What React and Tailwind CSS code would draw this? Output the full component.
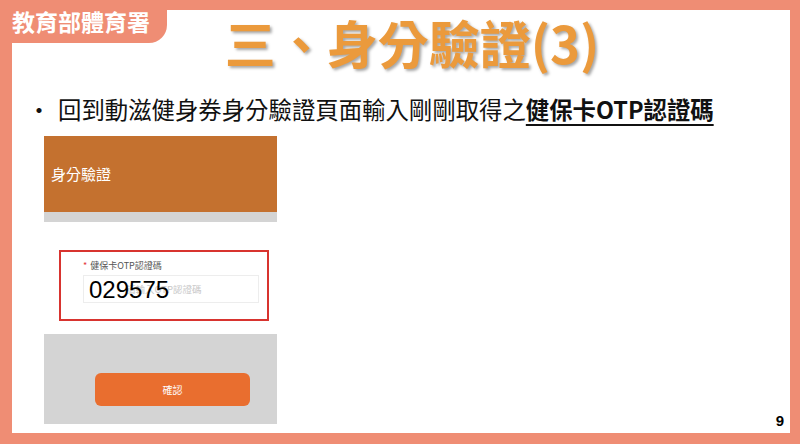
import React from 'react';

const cjk = { fontFamily: '"Noto Sans CJK TC", "Noto Sans", sans-serif' };

function PhoneShot() {
  return (
    <div className="flex w-[233px] flex-col" style={cjk}>
      <div className="flex h-[76px] items-center bg-[#C4712F] pl-[7px] text-[15px] text-white">身分驗證</div>
      <div className="h-[10px] bg-[#D4D4D4]" />
      <div className="pt-[28px] pb-[13px] pl-[15px]">
        <div className="flex h-[71px] w-[210px] flex-col border-2 border-[#D8342F] pl-[22px] pt-[8px]">
          <div className="flex items-center text-[9px] leading-[12px] text-[#555]">
            <span className="mr-[3px] text-[#E4393C]">*</span>健保卡OTP認證碼
          </div>
          <div className="relative mt-[3px] flex h-[28px] w-[176px] items-center border border-[#EDEDED] pl-[42px]">
            <span className="text-[9.5px] text-[#C8C8C8]">請輸入OTP認證碼</span>
            <span className="absolute left-[5px] top-[0px] text-[24px] leading-[28px] text-black" style={{ fontFamily: '"Liberation Sans", Arial, sans-serif' }}>029575</span>
          </div>
        </div>
      </div>
      <div className="h-[90px] bg-[#D4D4D4] pl-[51px] pt-[39px]">
        <div className="flex h-[33px] w-[155px] items-center justify-center rounded-[6px] bg-[#E96E2F] text-[10px] text-white">確認</div>
      </div>
    </div>
  );
}

export default function App() {
  return (
    <div className="relative h-[444px] w-[800px] overflow-hidden bg-[#EF8D74] pb-[11px] pl-[12px] pr-[10px] pt-[10px]">
      <div className="relative flex h-full flex-col bg-white">
        <div
          className="flex justify-center pl-[22px] pt-[1px] text-[51px] font-bold leading-[62px] text-[#EB9A3C] [text-shadow:2px_2px_3px_rgba(0,0,0,0.35)]"
          style={cjk}
        >
          三、身分驗證(3)
        </div>
        <div className="mt-[21px] flex items-center text-[23.4px] leading-[30px] text-[#111]" style={cjk}>
          <span className="ml-[15px] w-[31px] text-[24px]">•</span>
          <span>回到動滋健身券身分驗證頁面輸入剛剛取得之</span>
          <span className="font-bold underline decoration-[2px] underline-offset-[5px]">健保卡OTP認證碼</span>
        </div>
        <div className="ml-[32px] mt-[12px]">
          <PhoneShot />
        </div>
        <div className="absolute bottom-[1px] right-[6px] text-[15px] font-bold text-black" style={{ fontFamily: '"Liberation Sans", Arial, sans-serif' }}>9</div>
      </div>
      <div
        className="absolute left-0 top-0 flex h-[43px] w-[167px] items-center rounded-br-[18px] bg-[#EF8D74] pl-[12px] text-[23px] font-bold leading-none text-white"
        style={cjk}
      >
        教育部體育署
      </div>
    </div>
  );
}
